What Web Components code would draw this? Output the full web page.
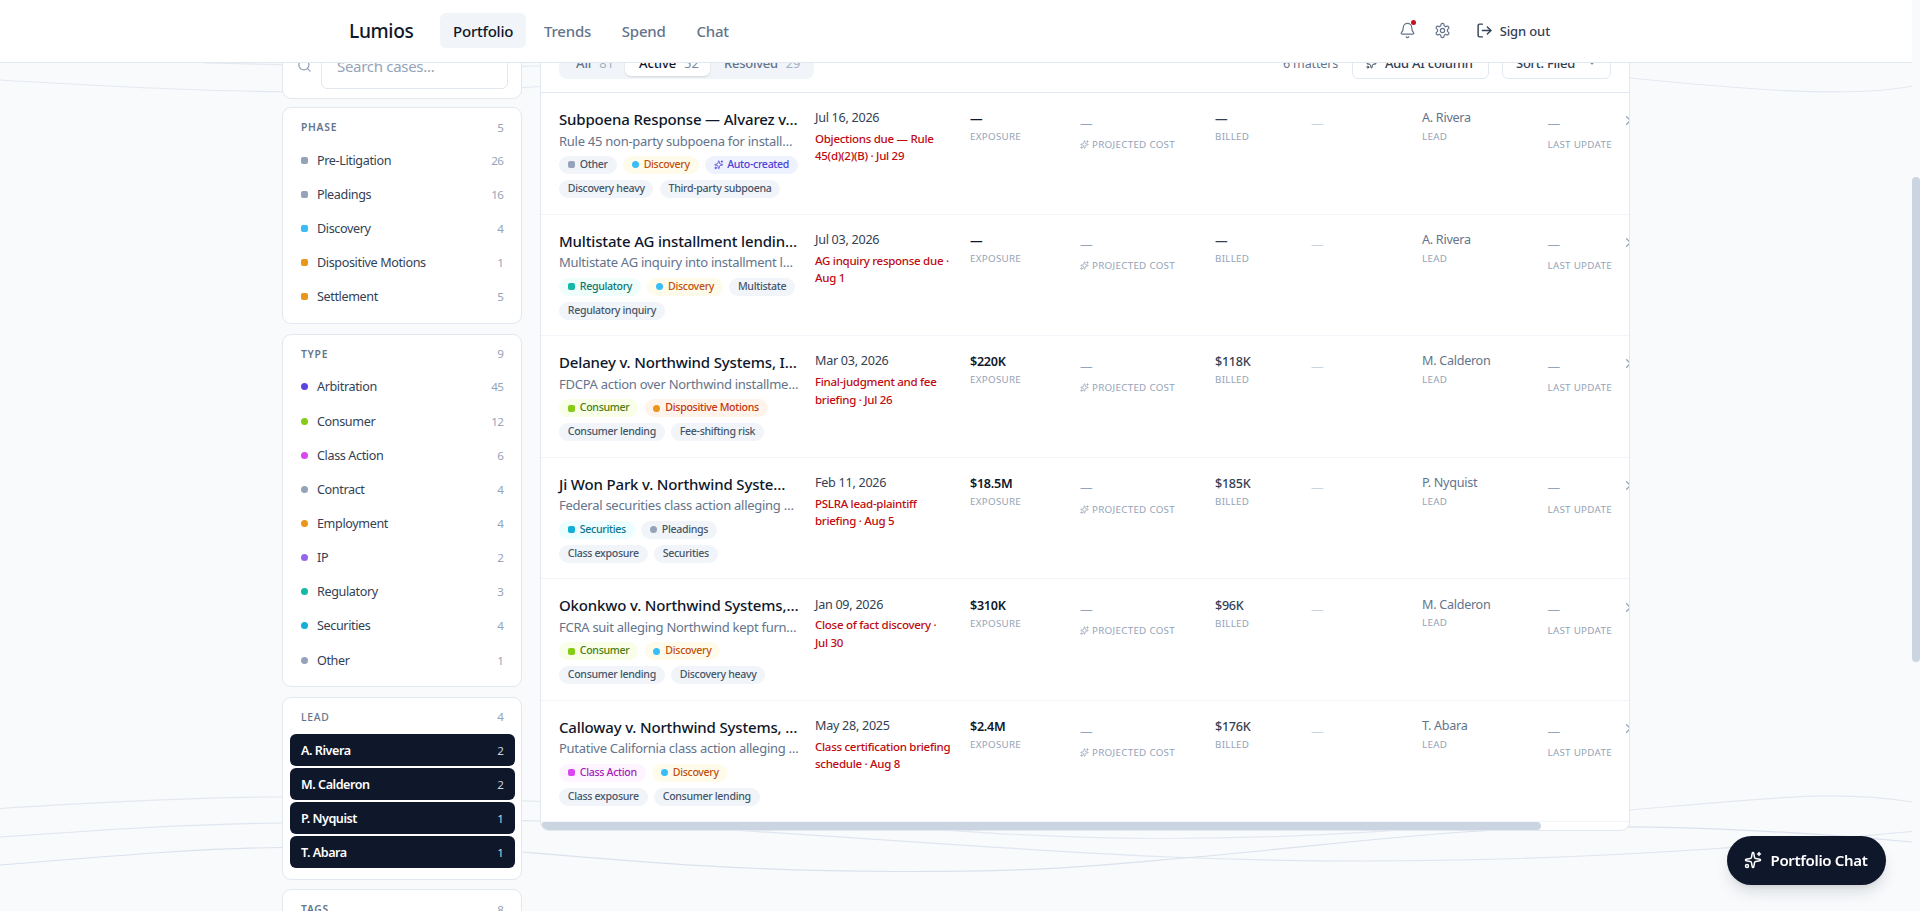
<!DOCTYPE html>
<html lang="en">
<head>
<meta charset="utf-8">
<title>Lumios - Portfolio</title>
<style>
  html, body {
    margin: 0;
    height: 100%;
    overflow: hidden;
    background: #f8fafc;
    font-family: "Noto Sans", "Open Sans", sans-serif;
    color: #0f172a;
  }
</style>
</head>
<body>
<lumios-app></lumios-app>
<script>
const ICONS = {
  sparkles: '<path d="M11.017 2.814a1 1 0 0 1 1.966 0l1.051 5.558a2 2 0 0 0 1.594 1.594l5.558 1.051a1 1 0 0 1 0 1.966l-5.558 1.051a2 2 0 0 0-1.594 1.594l-1.051 5.558a1 1 0 0 1-1.966 0l-1.051-5.558a2 2 0 0 0-1.594-1.594l-5.558-1.051a1 1 0 0 1 0-1.966l5.558-1.051a2 2 0 0 0 1.594-1.594z"/><path d="M20 2v4"/><path d="M22 4h-4"/><circle cx="4" cy="20" r="2"/>',
  bell: '<path d="M10.268 21a2 2 0 0 0 3.464 0"/><path d="M3.262 15.326A1 1 0 0 0 4 17h16a1 1 0 0 0 .74-1.673C19.41 13.956 18 12.499 18 8A6 6 0 0 0 6 8c0 4.499-1.411 5.956-2.738 7.326"/>',
  gear: '<path d="M12.22 2h-.44a2 2 0 0 0-2 2v.18a2 2 0 0 1-1 1.73l-.43.25a2 2 0 0 1-2 0l-.15-.08a2 2 0 0 0-2.73.73l-.22.38a2 2 0 0 0 .73 2.73l.15.1a2 2 0 0 1 1 1.72v.51a2 2 0 0 1-1 1.74l-.15.09a2 2 0 0 0-.73 2.73l.22.38a2 2 0 0 0 2.73.73l.15-.08a2 2 0 0 1 2 0l.43.25a2 2 0 0 1 1 1.73V20a2 2 0 0 0 2 2h.44a2 2 0 0 0 2-2v-.18a2 2 0 0 1 1-1.73l.43-.25a2 2 0 0 1 2 0l.15.08a2 2 0 0 0 2.73-.73l.22-.39a2 2 0 0 0-.73-2.73l-.15-.08a2 2 0 0 1-1-1.74v-.5a2 2 0 0 1 1-1.74l.15-.09a2 2 0 0 0 .73-2.73l-.22-.38a2 2 0 0 0-2.73-.73l-.15.08a2 2 0 0 1-2 0l-.43-.25a2 2 0 0 1-1-1.73V4a2 2 0 0 0-2-2z"/><circle cx="12" cy="12" r="3"/>',
  exit: '<path d="m16 17 5-5-5-5"/><path d="M21 12H9"/><path d="M9 21H5a2 2 0 0 1-2-2V5a2 2 0 0 1 2-2h4"/>',
  search: '<circle cx="11" cy="11" r="8"/><path d="m21 21-4.34-4.34"/>',
  down: '<path d="m6 9 6 6 6-6"/>',
  right: '<path d="m9 18 6-6-6-6"/>',
};

const DOTS = {
  slate: '#94a3b8', sky: '#38bdf8', amber: '#ea961b', indigo: '#5b45e0', lime: '#84cc16',
  fuchsia: '#d946ef', violet: '#9467ea', teal: '#14b8a6', cyan: '#12b0d6',
};

// filter groups in the sidebar: label, dot colour, count
const PHASES = [
  ['Pre-Litigation', 'slate', 26], ['Pleadings', 'slate', 16], ['Discovery', 'sky', 4],
  ['Dispositive Motions', 'amber', 1], ['Settlement', 'amber', 5],
];
const TYPES = [
  ['Arbitration', 'indigo', 45], ['Consumer', 'lime', 12], ['Class Action', 'fuchsia', 6],
  ['Contract', 'slate', 4], ['Employment', 'amber', 4], ['IP', 'violet', 2],
  ['Regulatory', 'teal', 3], ['Securities', 'cyan', 4], ['Other', 'slate', 1],
];
const LEADS = [['A. Rivera', '', 2], ['M. Calderon', '', 2], ['P. Nyquist', '', 1], ['T. Abara', '', 1]];

// chips are [text, tone, dot colour, dot shape]
const DISCOVERY = ['Discovery', 'amber', 'sky', 'round'];
const CONSUMER = ['Consumer', 'lime', 'lime', 'square'];
const MATTERS = [
  {
    title: 'Subpoena Response — Alvarez v…',
    summary: 'Rule 45 non-party subpoena for install…',
    chips: [['Other', '', 'slate', 'square'], DISCOVERY, ['Auto-created', 'indigo', 'icon'], ['Discovery heavy'], ['Third-party subpoena']],
    filed: 'Jul 16, 2026', due: 'Objections due — Rule<br>45(d)(2)(B) · Jul 29', exposure: '—', billed: '—', lead: 'A. Rivera',
  },
  {
    title: 'Multistate AG installment lendin…',
    summary: 'Multistate AG inquiry into installment l…',
    chips: [['Regulatory', 'teal', 'teal', 'square'], DISCOVERY, ['Multistate'], ['Regulatory inquiry']],
    filed: 'Jul 03, 2026', due: 'AG inquiry response due ·<br>Aug 1', exposure: '—', billed: '—', lead: 'A. Rivera',
  },
  {
    title: 'Delaney v. Northwind Systems, I…',
    summary: 'FDCPA action over Northwind installme…',
    chips: [CONSUMER, ['Dispositive Motions', 'orange', 'amber', 'round'], ['Consumer lending'], ['Fee-shifting risk']],
    filed: 'Mar 03, 2026', due: 'Final-judgment and fee<br>briefing · Jul 26', exposure: '$220K', billed: '$118K', lead: 'M. Calderon',
  },
  {
    title: 'Ji Won Park v. Northwind Syste…',
    summary: 'Federal securities class action alleging …',
    chips: [['Securities', 'cyan', 'cyan', 'square'], ['Pleadings', '', 'slate', 'round'], ['Class exposure'], ['Securities']],
    filed: 'Feb 11, 2026', due: 'PSLRA lead-plaintiff<br>briefing · Aug 5', exposure: '$18.5M', billed: '$185K', lead: 'P. Nyquist',
  },
  {
    title: 'Okonkwo v. Northwind Systems,…',
    summary: 'FCRA suit alleging Northwind kept furn…',
    chips: [CONSUMER, DISCOVERY, ['Consumer lending'], ['Discovery heavy']],
    filed: 'Jan 09, 2026', due: 'Close of fact discovery ·<br>Jul 30', exposure: '$310K', billed: '$96K', lead: 'M. Calderon',
  },
  {
    title: 'Calloway v. Northwind Systems, …',
    summary: 'Putative California class action alleging …',
    chips: [['Class Action', 'fuchsia', 'fuchsia', 'square'], DISCOVERY, ['Class exposure'], ['Consumer lending']],
    filed: 'May 28, 2025', due: 'Class certification briefing<br>schedule · Aug 8', exposure: '$2.4M', billed: '$176K', lead: 'T. Abara',
  },
];

class BaseElement extends HTMLElement {
  constructor() {
    super();
    this.attachShadow({ mode: 'open' });
  }

  connectedCallback() {
    this.shadowRoot.innerHTML = this.render();
  }
}

class UiIcon extends BaseElement {
  render() {
    const size = this.getAttribute('size') || 16;
    return `
      <style>
        :host { display: inline-flex; flex: none; }
        svg { display: block; fill: none; stroke: currentColor; stroke-linecap: round; stroke-linejoin: round; }
      </style>
      <svg width="${size}" height="${size}" viewBox="0 0 24 24" stroke-width="${this.getAttribute('stroke') || 2}">${ICONS[this.getAttribute('name')]}</svg>`;
  }
}
customElements.define('ui-icon', UiIcon);

class UiDot extends BaseElement {
  render() {
    return `
      <style>
        :host {
          display: block;
          flex: none;
          width: 7px;
          height: 7px;
          border-radius: ${this.getAttribute('shape') === 'square' ? '2px' : '50%'};
          background: ${DOTS[this.getAttribute('color')]};
        }
      </style>`;
  }
}
customElements.define('ui-dot', UiDot);

class UiChip extends BaseElement {
  render() {
    return `
      <style>
        :host {
          display: flex;
          align-items: center;
          gap: 5px;
          height: 18px;
          padding: 0 8.8px;
          border-radius: 9px;
          background: #f1f5f9;
          color: #475569;
          font-size: 10.6px;
          font-weight: 500;
          letter-spacing: -0.32px;
          line-height: 17px;
          white-space: nowrap;
        }
        :host([tone="amber"]) { background: #fffbeb; color: #c2500c; }
        :host([tone="orange"]) { background: #fff4ec; color: #c2360c; }
        :host([tone="indigo"]) { background: #eef2ff; color: #4f3fd8; }
        :host([tone="teal"]) { background: #effefa; color: #0f766e; }
        :host([tone="lime"]) { background: #f8fee7; color: #4d7c0f; }
        :host([tone="cyan"]) { background: #ecfeff; color: #0e7490; }
        :host([tone="fuchsia"]) { background: #fdf4ff; color: #a81bb8; }
        span { padding-bottom: 1px; }
      </style>
      <slot name="mark"></slot><span><slot></slot></span>`;
  }
}
customElements.define('ui-chip', UiChip);

class NavLink extends BaseElement {
  render() {
    return `
      <style>
        :host {
          display: flex;
          align-items: center;
          height: 35px;
          padding: 0 13px;
          border-radius: 6px;
          color: #64748b;
          font-size: 15px;
          font-weight: 500;
          letter-spacing: -0.22px;
        }
        :host([active]) { background: #f1f5f9; color: #0f172a; }
      </style>
      <slot></slot>`;
  }
}
customElements.define('nav-link', NavLink);

class AppHeader extends BaseElement {
  render() {
    return `
      <style>
        :host {
          display: flex;
          align-items: center;
          box-sizing: border-box;
          height: 63px;
          padding: 0 362px 1px 349px;
          background: #fff;
          border-bottom: 1px solid #e2e8f0;
          position: relative;
          z-index: 2;
        }
        .brand { width: 91px; font-size: 19.2px; font-weight: 500; letter-spacing: -0.36px; }
        nav { display: flex; gap: 4.8px; flex: 1; }
        .actions { display: flex; align-items: center; color: #64748b; }
        .bell { display: flex; position: relative; margin-right: 18px; }
        .bell i {
          position: absolute;
          top: -2px;
          right: 0;
          width: 5px;
          height: 5px;
          border-radius: 50%;
          background: #c80f1a;
        }
        .out {
          display: flex;
          align-items: center;
          gap: 7px;
          margin-left: 24.5px;
          color: #334155;
          font-size: 13px;
          font-weight: 500;
          letter-spacing: -0.12px;
        }
      </style>
      <div class="brand">Lumios</div>
      <nav>
        <nav-link active>Portfolio</nav-link>
        <nav-link>Trends</nav-link>
        <nav-link>Spend</nav-link>
        <nav-link>Chat</nav-link>
      </nav>
      <div class="actions">
        <span class="bell"><ui-icon name="bell" size="17" stroke="1.7"></ui-icon><i></i></span>
        <ui-icon name="gear" size="17" stroke="1.7"></ui-icon>
        <span class="out"><ui-icon name="exit" size="17" stroke="2"></ui-icon>Sign out</span>
      </div>`;
  }
}
customElements.define('app-header', AppHeader);

class SearchBox extends BaseElement {
  render() {
    return `
      <style>
        :host {
          display: flex;
          align-items: center;
          box-sizing: border-box;
          height: 66px;
          margin-bottom: -1.2px;
          padding: 0 13px 0 14px;
          gap: 9px;
          background: #fff;
          border: 1px solid #e2e8f0;
          border-radius: 9px;
          color: #94a3b8;
        }
        ui-icon { padding-bottom: 2px; }
        div {
          flex: 1;
          box-sizing: border-box;
          height: 45px;
          padding-left: 15px;
          border: 1px solid #e2e8f0;
          border-radius: 6px;
          font-size: 15px;
          line-height: 43px;
          letter-spacing: -0.3px;
        }
      </style>
      <ui-icon name="search" size="15"></ui-icon>
      <div>Search cases...</div>`;
  }
}
customElements.define('search-box', SearchBox);

class FilterGroup extends BaseElement {
  render() {
    const shape = this.getAttribute('shape');
    const items = this.items || [];
    return `
      <style>
        :host {
          display: block;
          box-sizing: border-box;
          padding: 0 6.5px 10.8px 7px;
          background: #fff;
          border: 1px solid #e2e8f0;
          border-radius: 9px;
        }
        header, li { display: flex; align-items: center; padding: 0 11px 0 11px; }
        header {
          height: 35.9px;
          padding-top: 2px;
          box-sizing: border-box;
          color: #64748b;
          font-size: 10.3px;
          font-weight: 600;
          letter-spacing: 0.75px;
        }
        header span, li span { margin-left: auto; color: #94a3b8; font-size: 11.6px; font-weight: 400; letter-spacing: -0.5px; }
        ul { display: flex; flex-direction: column; gap: 2.15px; margin: 0; padding: 0; list-style: none; }
        li { height: 32px; padding-top: 0.8px; box-sizing: border-box; font-size: 12.6px; color: #334155; letter-spacing: -0.38px; border-radius: 6px; }
        ui-dot { margin-right: 9px; }
        :host([selected]) header { font-weight: 500; }
        :host([selected]) li { background: #0f172a; color: #fff; font-weight: 600; letter-spacing: -0.46px; }
        :host([selected]) li span { color: #cbd5e1; }
      </style>
      <header><slot></slot><span>${this.getAttribute('total')}</span></header>
      <ul>${items.map(([label, color, count]) => `
        <li>${color ? `<ui-dot color="${color}" shape="${shape}"></ui-dot>` : ''}${label}<span>${count}</span></li>`).join('')}
      </ul>`;
  }
}
customElements.define('filter-group', FilterGroup);

class FilterSidebar extends BaseElement {
  connectedCallback() {
    super.connectedCallback();
    const groups = { phase: PHASES, type: TYPES, lead: LEADS };
    Object.keys(groups).forEach((id) => {
      const group = this.shadowRoot.getElementById(id);
      group.items = groups[id];
      group.connectedCallback();
    });
  }

  render() {
    return `
      <style>
        :host { display: flex; flex-direction: column; gap: 9.3px; flex: none; width: 240px; }
      </style>
      <search-box></search-box>
      <filter-group id="phase" shape="square" total="5">PHASE</filter-group>
      <filter-group id="type" shape="round" total="9">TYPE</filter-group>
      <filter-group id="lead" selected total="4">LEAD</filter-group>
      <filter-group total="8">TAGS</filter-group>`;
  }
}
customElements.define('filter-sidebar', FilterSidebar);

class MattersToolbar extends BaseElement {
  render() {
    return `
      <style>
        :host {
          display: flex;
          align-items: center;
          box-sizing: border-box;
          height: 59px;
          padding: 0 18px;
          border-bottom: 1px solid #e2e8f0;
          color: #64748b;
          font-size: 13px;
        }
        .tabs { display: flex; box-sizing: border-box; height: 32px; padding: 3px; border-radius: 8px; background: #f1f5f9; font-weight: 500; letter-spacing: -0.1px; }
        .tabs div { display: flex; align-items: center; gap: 8px; box-sizing: border-box; padding-left: 14px; border-radius: 6px; }
        .tabs b { font-weight: 400; color: #a3b0c2; }
        .tabs .on { background: #fff; color: #0f172a; box-shadow: 0 1px 2px rgba(15, 23, 42, .14); }
        .tabs .on b { color: #7b899d; }
        .count { margin-left: auto; margin-right: 14px; font-size: 12.5px; letter-spacing: -0.15px; }
        .button {
          display: flex;
          align-items: center;
          box-sizing: border-box;
          height: 32px;
          padding: 0 13px;
          border: 1px solid #e2e8f0;
          border-radius: 6px;
          color: #334155;
          font-weight: 500;
          letter-spacing: -0.25px;
        }
        .add { width: 137px; gap: 8px; margin-right: 13px; white-space: nowrap; }
        .sort { width: 109px; justify-content: space-between; }
      </style>
      <div class="tabs">
        <div style="width: 63px">All <b>81</b></div>
        <div class="on" style="width: 85px">Active <b>52</b></div>
        <div style="width: 101px; letter-spacing: -0.25px">Resolved <b>29</b></div>
      </div>
      <span class="count">6 matters</span>
      <div class="button add"><ui-icon name="sparkles" size="11"></ui-icon>Add AI column</div>
      <div class="button sort">Sort: Filed <ui-icon name="down" size="10"></ui-icon></div>`;
  }
}
customElements.define('matters-toolbar', MattersToolbar);

class MatterRow extends BaseElement {
  chip([text, tone = '', dot, shape]) {
    let mark = '';
    if (dot === 'icon') {
      mark = '<ui-icon slot="mark" name="sparkles" size="9.5" style="margin-right:-1px"></ui-icon>';
    } else if (dot) {
      mark = `<ui-dot slot="mark" color="${dot}" shape="${shape}"></ui-dot>`;
    }
    return `<ui-chip tone="${tone}">${mark}${text}</ui-chip>`;
  }

  render() {
    const m = this.matter;
    return `
      <style>
        :host {
          display: grid;
          grid-template-columns: 240px 139px 94px 119px 80px 95px 109.5px 62.5px 16px;
          column-gap: 16px;
          box-sizing: border-box;
          height: 121.55px;
          padding: 16.4px 18px 0;
          border-bottom: 1px solid #f1f5f9;
          white-space: nowrap;
          font-size: 12.6px;
        }
        .title { margin-top: -1.2px; font-size: 15px; font-weight: 500; line-height: 22px; letter-spacing: -0.16px; }
        .summary { margin-top: 0.4px; font-size: 13px; line-height: 20px; color: #64748b; letter-spacing: -0.27px; }
        .chips { display: flex; flex-wrap: wrap; gap: 6.3px; margin-top: 5.4px; width: 246px; }
        .date, .value, .lead { line-height: 18px; letter-spacing: -0.28px; color: #334155; }
        .due { margin-top: 2.9px; color: #be0a10; font-size: 11.5px; font-weight: 500; line-height: 17.2px; letter-spacing: -0.28px; }
        .value { padding-top: 1px; font-weight: 500; }
        .strong { color: #0f172a; font-weight: 600; }
        .lead { color: #64748b; }
        .label { display: flex; align-items: center; gap: 3px; margin-top: 1.8px; font-size: 9.8px; line-height: 15px; letter-spacing: 0.28px; color: #94a3b8; }
        .value + .label { margin-top: 1px; }
        .empty { padding-top: 5.4px; line-height: 18px; color: #94a3b8; }
        .empty + .label { margin-top: 4.1px; }
        .faint { color: #cbd5e1; }
        .go { margin-left: -5px; padding-top: 4px; color: #94a3b8; }
      </style>
      <div>
        <div class="title">${m.title}</div>
        <div class="summary">${m.summary}</div>
        <div class="chips">${m.chips.map(chip => this.chip(chip)).join('')}</div>
      </div>
      <div><div class="date">${m.filed}</div><div class="due">${m.due}</div></div>
      <div><div class="value strong">${m.exposure}</div><div class="label">EXPOSURE</div></div>
      <div><div class="empty">—</div><div class="label"><ui-icon name="sparkles" size="9"></ui-icon>PROJECTED COST</div></div>
      <div><div class="value">${m.billed}</div><div class="label">BILLED</div></div>
      <div><div class="empty faint">—</div></div>
      <div><div class="lead">${m.lead}</div><div class="label">LEAD</div></div>
      <div><div class="empty">—</div><div class="label">LAST UPDATE</div></div>
      <div class="go"><ui-icon name="right" size="15"></ui-icon></div>`;
  }
}
customElements.define('matter-row', MatterRow);

class MattersPanel extends BaseElement {
  connectedCallback() {
    super.connectedCallback();
    const rows = this.shadowRoot.querySelector('.rows');
    MATTERS.forEach((matter) => {
      const row = document.createElement('matter-row');
      row.matter = matter;
      rows.appendChild(row);
    });
  }

  render() {
    return `
      <style>
        :host {
          display: block;
          box-sizing: border-box;
          width: 1090px;
          overflow: hidden;
          background: #fff;
          border: 1px solid #e2e8f0;
          border-radius: 9px;
        }
        .rows { overflow: hidden; }
        .scroll { height: 8px; }
        .thumb { width: 1000px; height: 8px; border-radius: 4px; background: #cbd5e1; }
      </style>
      <matters-toolbar></matters-toolbar>
      <div class="rows"></div>
      <div class="scroll"><div class="thumb"></div></div>`;
  }
}
customElements.define('matters-panel', MattersPanel);

class WaveBackdrop extends BaseElement {
  render() {
    return `
      <style>
        :host { display: block; }
        svg { display: block; fill: none; stroke: #e4e9f0; stroke-width: 1.2; }
      </style>
      <svg width="1912" height="848" viewBox="0 63 1912 848">
        <path d="M0 80C100 86 190 91 282 91.7S450 92 540 86.5C900 50 1250 40 1630 78C1730 88 1850 99 1912 86"/>
        <path d="M205 63C330 66 450 68 540 66C700 62 760 55 800 50"/>
        <path d="M0 808.5C120 801 220 797 282 797S450 798 540 801.5C760 812 960 838 1155 838.5S1480 823 1630 810S1840 790 1912 802"/>
        <path d="M0 837C100 830 190 824 282 823S440 818 540 821C760 828 960 848 1170 857S1560 859 1710 849S1840 837 1912 831.5" stroke="#e0e6ef"/>
        <path d="M0 865C100 857 200 848 282 847.5S440 846 522 852C640 862 740 871 895 871.5S1100 865 1195 857S1380 837 1480 831S1700 823 1912 842" stroke="#dbe2ec"/>
      </svg>`;
  }
}
customElements.define('wave-backdrop', WaveBackdrop);

class ChatButton extends BaseElement {
  render() {
    return `
      <style>
        :host {
          position: fixed;
          right: 34px;
          bottom: 26px;
          z-index: 3;
          display: flex;
          align-items: center;
          box-sizing: border-box;
          width: 159px;
          height: 49px;
          padding: 0 0 1px 17px;
          gap: 8.5px;
          border-radius: 25px;
          background: #0f172a;
          color: #fff;
          font-size: 15px;
          font-weight: 600;
          letter-spacing: -0.32px;
          white-space: nowrap;
          box-shadow: 0 9px 16px -3px rgba(15, 23, 42, .14), 0 4px 6px -4px rgba(15, 23, 42, .12);
        }
      </style>
      <ui-icon name="sparkles" size="18"></ui-icon><slot></slot>`;
  }
}
customElements.define('chat-button', ChatButton);

class LumiosApp extends BaseElement {
  render() {
    return `
      <style>
        :host { display: flex; height: 100vh; overflow: hidden; }
        .page { display: flex; flex-direction: column; width: 1912px; }
        .stage { display: grid; flex: 1; min-height: 0; overflow: hidden; }
        .stage > * { grid-area: 1 / 1; }
        /* the content is scrolled, so its top sits under the header */
        main { display: flex; align-items: flex-start; gap: 18px; height: 0; margin: -30px 0 0 282px; z-index: 1; }
        .track { flex: 1; padding-top: 177px; }
        .thumb { height: 485px; border-radius: 4px; background: #cbd5e1; }
      </style>
      <div class="page">
        <app-header></app-header>
        <div class="stage">
          <wave-backdrop></wave-backdrop>
          <main>
            <filter-sidebar></filter-sidebar>
            <matters-panel></matters-panel>
          </main>
        </div>
      </div>
      <div class="track"><div class="thumb"></div></div>
      <chat-button>Portfolio Chat</chat-button>`;
  }
}
customElements.define('lumios-app', LumiosApp);
</script>
</body>
</html>
